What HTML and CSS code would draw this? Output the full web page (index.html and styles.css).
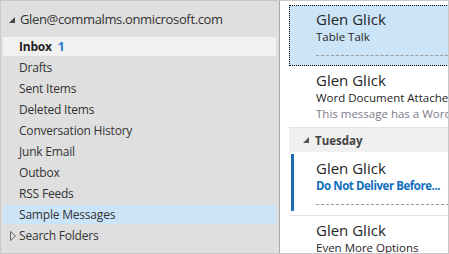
FILE: index.html
```html
<!DOCTYPE html>
<html lang="en">
<head>
    <meta charset="UTF-8">
    <title>Mail</title>
    <link rel="stylesheet" href="styles.css">
</head>
<body>
    <div class="window">
        <div class="folders">
            <div class="account">
                <svg class="caret" width="6" height="6" viewBox="0 0 6 6"><polygon points="6,0 6,6 0,6" fill="#444"/></svg>
                <span>Glen@commalms.onmicrosoft.com</span>
            </div>
            <div class="folder current"><span class="bold">Inbox</span><span class="count">1</span></div>
            <div class="folder">Drafts</div>
            <div class="folder">Sent Items</div>
            <div class="folder">Deleted Items</div>
            <div class="folder">Conversation History</div>
            <div class="folder">Junk Email</div>
            <div class="folder">Outbox</div>
            <div class="folder">RSS Feeds</div>
            <div class="folder selected">Sample Messages</div>
            <div class="folder">
                <svg class="expand" width="6" height="10" viewBox="0 0 6 10"><polygon points="0.5,0.5 5.5,5 0.5,9.5" fill="none" stroke="#666" stroke-width="1"/></svg>
                Search Folders
            </div>
        </div>

        <div class="messages">
            <div class="message active">
                <div class="sender">Glen Glick</div>
                <div class="subject">Table Talk</div>
                <div class="rule"></div>
            </div>
            <div class="message">
                <div class="sender">Glen Glick</div>
                <div class="subject">Word Document Attached</div>
                <div class="preview">This message has a Word document attached</div>
            </div>
            <div class="group">
                <svg class="caret" width="6" height="6" viewBox="0 0 6 6"><polygon points="6,0 6,6 0,6" fill="#555"/></svg>
                Tuesday
            </div>
            <div class="message unread">
                <div class="flag">
                    <div class="sender">Glen Glick</div>
                    <div class="subject">Do Not Deliver Before...</div>
                    <div class="rule"></div>
                </div>
            </div>
            <div class="message">
                <div class="sender">Glen Glick</div>
                <div class="subject">Even More Options</div>
            </div>
        </div>
    </div>
</body>
</html>
```

FILE: styles.css
```css
body {
    margin: 0;
    font-family: "Open Sans", "Noto Sans", sans-serif;
    color: #262626;
}

.window {
    width: 449px;
    height: 254px;
    box-sizing: border-box;
    border: 1px solid #c8c8c8;
    display: flex;
    overflow: hidden;
}

.folders {
    width: 278px;
    flex-shrink: 0;
    background-color: #dfdfdf;
    border-right: 1px solid #ababab;
    font-size: 12px;
    letter-spacing: -0.2px;
}

.account {
    height: 36px;
    display: flex;
    align-items: center;
    padding-left: 8px;
    font-size: 13px;
    letter-spacing: -0.35px;
    color: #333;
}

.account .caret {
    margin-right: 5px;
    margin-top: 2px;
}

.folder {
    height: 19px;
    margin: 0 3px 2px 2px;
    padding-left: 16px;
    display: flex;
    align-items: center;
    color: #333;
}

.folder.current {
    background-color: #f1f1f1;
}

.folder.selected {
    background-color: #cce4f7;
}

.bold {
    font-weight: bold;
    color: #222;
}

.count {
    color: #2b7cd3;
    font-weight: bold;
    margin-left: 6px;
}

.expand {
    margin-left: -9px;
    margin-right: 3px;
}

.messages {
    flex: 1;
    background-color: #fff;
    padding-top: 4px;
    overflow: hidden;
}

.message {
    width: 200px;
    margin-left: 9px;
    padding: 4px 0 0 27px;
    box-sizing: border-box;
    height: 62px;
    border-bottom: 1px solid #e3e3e3;
}

.message.active {
    height: 61px;
    background-color: #cce4f7;
    border: 1px dotted #000;
    padding-left: 26px;
    padding-top: 3px;
}

.sender {
    font-size: 15px;
    line-height: 20px;
}

.subject {
    font-size: 11.5px;
    line-height: 16px;
    white-space: nowrap;
}

.preview {
    font-size: 11.5px;
    line-height: 15px;
    color: #7d7a8c;
    white-space: nowrap;
}

.rule {
    margin-top: 10px;
    border-top: 1px dashed #9a9a9a;
}

.group {
    width: 200px;
    margin-left: 9px;
    height: 24px;
    background-color: #f0f0f0;
    display: flex;
    align-items: center;
    padding-left: 14px;
    box-sizing: border-box;
    font-size: 11.5px;
    font-weight: bold;
    color: #444;
}

.group .caret {
    margin-right: 6px;
}

.message.unread {
    height: 64px;
    padding: 2px 0 0 2px;
}

.flag {
    height: 57px;
    border-left: 3px solid #1e6bb5;
    padding: 4px 0 0 22px;
    box-sizing: border-box;
}

.message.unread .subject {
    color: #106ebe;
    font-weight: bold;
    letter-spacing: -0.45px;
}
```
